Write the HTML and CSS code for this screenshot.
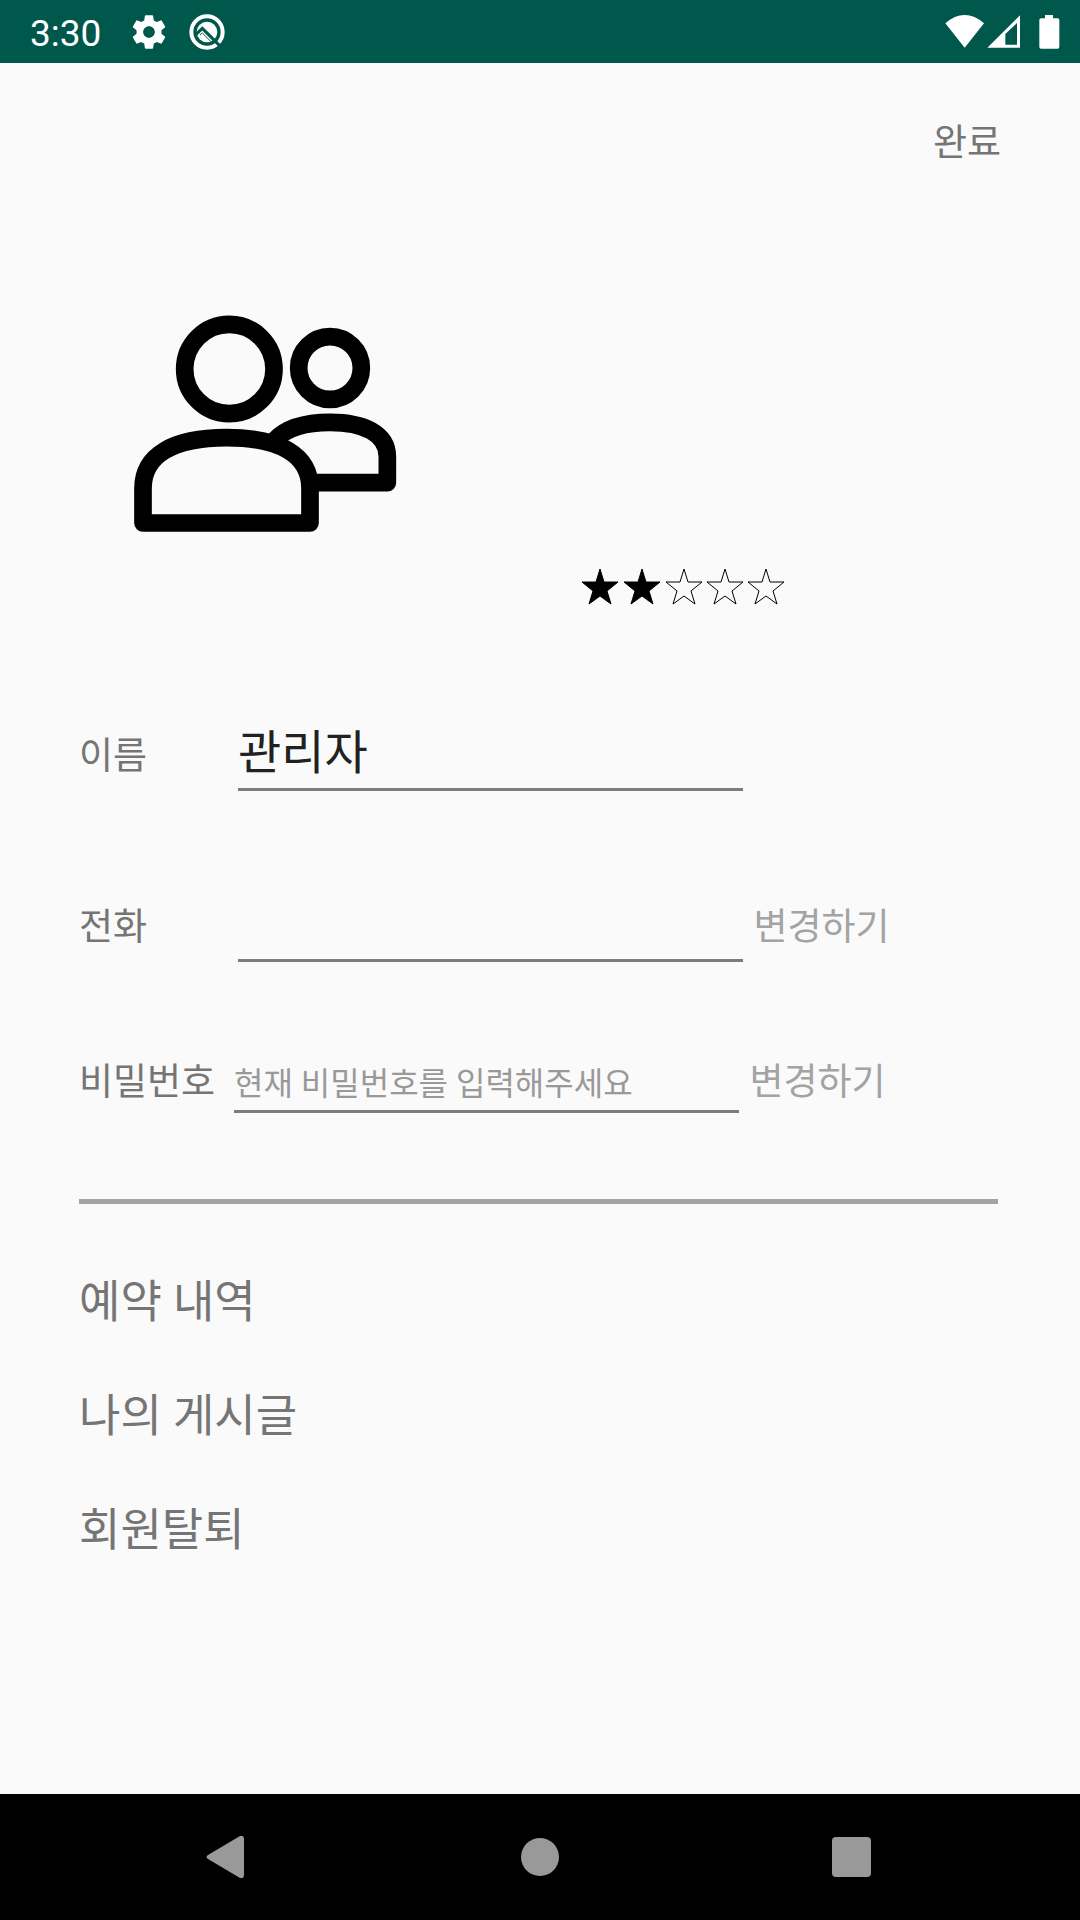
FILE: index.html
```html
<!DOCTYPE html>
<html lang="ko">
<head>
<meta charset="utf-8">
<meta name="viewport" content="width=device-width, initial-scale=1">
<title>내 정보</title>
<link rel="stylesheet" href="styles.css">
</head>
<body>
<div class="screen">
  <header class="status">
    <time class="clock">3:30</time>
    <svg class="status-icon" width="40" height="40" viewBox="0 0 24 24" aria-hidden="true"><path fill="#fff" d="M19.43 12.98c.04-.32.07-.64.07-.98s-.03-.66-.07-.98l2.11-1.65c.19-.15.24-.42.12-.64l-2-3.46c-.12-.22-.39-.3-.61-.22l-2.49 1c-.52-.4-1.08-.73-1.69-.98l-.38-2.65C14.46 2.18 14.25 2 14 2h-4c-.25 0-.46.18-.49.42l-.38 2.65c-.61.25-1.17.59-1.69.98l-2.49-1c-.23-.09-.49 0-.61.22l-2 3.46c-.13.22-.07.49.12.64l2.11 1.65c-.04.32-.07.65-.07.98s.03.66.07.98l-2.11 1.65c-.19.15-.24.42-.12.64l2 3.46c.12.22.39.3.61.22l2.49-1c.52.4 1.08.73 1.69.98l.38 2.65c.03.24.24.42.49.42h4c.25 0 .46-.18.49-.42l.38-2.65c.61-.25 1.17-.59 1.69-.98l2.49 1c.23.09.49 0 .61-.22l2-3.46c.12-.22.07-.49-.12-.64l-2.11-1.65zM12 15.5c-1.93 0-3.500-1.570-3.500-3.500s1.570-3.500 3.500-3.500 3.500 1.570 3.500 3.500-1.570 3.500-3.500 3.500z"/></svg>
    <svg class="status-icon status-icon-q" width="38" height="38" viewBox="0 0 114 114" fill="none" aria-hidden="true">
      <circle cx="57" cy="57" r="47" stroke="#fff" stroke-width="12"/>
      <circle cx="57" cy="57" r="31" fill="#fff"/>
      <path d="M24 64L43 46L98 101" stroke="#00574b" stroke-width="9"/>
      <path d="M36 66L43 60L72 89" stroke="#00574b" stroke-width="3"/>
    </svg>
    <svg class="signals" width="116" height="34" viewBox="0 0 348 102" aria-hidden="true">
      <path fill="#fff" d="M1 25Q29 0 59 0T117 25L59 98Z"/>
      <path fill="#fff" fill-rule="evenodd" d="M127 98L225 1V98ZM181 57V89H216V24Z"/>
      <path fill="#fff" d="M300 0h24v10h14q5 0 5 5v81q0 5-5 5h-50q-5 0-5-5v-81q0-5 5-5h12z"/>
    </svg>
  </header>

  <main class="profile">
    <div class="actions"><button type="button" class="text-button done">완료</button></div>

    <svg class="avatar" width="290" height="250" viewBox="0 0 870 750" fill="none" stroke="#000" stroke-width="53" stroke-linejoin="round" role="img" aria-label="프로필 사진">
      <circle cx="328" cy="207" r="134"/>
      <circle cx="630" cy="204" r="94"/>
      <path d="M69 669V565C69 465 160 413 320 413S570 465 570 565V669Z"/>
      <path d="M590 548H802V470C802 400 730 367 630 367C560 367 500 382 465 420"/>
    </svg>

    <svg class="rating" width="204" height="38" viewBox="0 0 204 38" role="img" aria-label="별점 5점 중 2점">
      <defs><path id="star" d="M18 0L22 13H36L25 22L29 35L18 27L7 35L11 22L0 13H14Z"/></defs>
      <g stroke="#000">
        <use href="#star" x="1" y="1"/>
        <use href="#star" x="43" y="1"/>
      </g>
      <g fill="none" stroke="#000">
        <use href="#star" x="85" y="1"/>
        <use href="#star" x="126" y="1"/>
        <use href="#star" x="167" y="1"/>
      </g>
    </svg>

    <form class="fields">
      <div class="field">
        <label class="label" for="name">이름</label>
        <input class="input" id="name" type="text" value="관리자">
      </div>
      <div class="field">
        <label class="label" for="phone">전화</label>
        <input class="input" id="phone" type="tel" placeholder=" ">
        <button type="button" class="text-button change">변경하기</button>
      </div>
      <div class="field field-compact">
        <label class="label" for="password">비밀번호</label>
        <input class="input" id="password" type="password" placeholder="현재 비밀번호를 입력해주세요">
        <button type="button" class="text-button change">변경하기</button>
      </div>
    </form>

    <hr class="divider">

    <nav class="menu">
      <a class="menu-link" href="#reservations">예약 내역</a>
      <a class="menu-link" href="#posts">나의 게시글</a>
      <a class="menu-link" href="#leave">회원탈퇴</a>
    </nav>
  </main>

  <footer class="navbar">
    <button type="button" class="nav-button" aria-label="뒤로"><svg width="42" height="42" viewBox="0 0 42 42"><path fill="#999" d="M2 19L34 0Q38-1 38 3V39Q38 43 34 42L2 23Q-1 21 2 19Z"/></svg></button>
    <button type="button" class="nav-button" aria-label="홈"><svg width="42" height="42" viewBox="0 0 42 42"><circle cx="21" cy="21" r="19" fill="#999"/></svg></button>
    <button type="button" class="nav-button" aria-label="최근 앱"><svg width="42" height="42" viewBox="0 0 42 42"><rect x="0" y="1" width="39" height="40" rx="4" fill="#999"/></svg></button>
  </footer>
</div>
</body>
</html>
```

FILE: styles.css
```css
* { box-sizing: border-box; }

body {
  margin: 0;
  background: #fafafa;
  color: #757575;
  font-family: Roboto, "Noto Sans CJK KR", sans-serif;
  font-size: 37px;
  line-height: 54px;
}

button, input { font: inherit; color: inherit; }

svg { display: block; flex: none; }

.screen {
  display: flex;
  flex-direction: column;
  min-height: 100vh;
}

.status {
  display: flex;
  align-items: center;
  height: 63px;
  padding: 0 19px 0 30px;
  background: #00574b;
  color: #fff;
}

.clock { line-height: 63px; padding-top: 3px; }

.status-icon { margin-left: 28px; }

.status-icon-q { margin-left: 19px; }

.signals { margin-left: auto; }

.profile {
  flex: 1;
  display: flex;
  flex-direction: column;
  padding: 54px 82px 48px 79px;
}

.actions {
  display: flex;
  justify-content: flex-end;
}

.text-button {
  padding: 0;
  border: 0;
  background: none;
  color: #a3a3a3;
  cursor: pointer;
}

.done { margin-right: -3px; color: #757575; }

.avatar { margin: 129px 0 0 41px; }

.rating { margin: 18px 0 0 502px; }

.fields {
  display: flex;
  flex-direction: column;
  margin-top: 105px;
}

.field {
  display: flex;
  align-items: baseline;
  height: 80px;
  margin-bottom: 91px;
}

.label { width: 159px; }

.input {
  width: 55%;
  height: 80px;
  padding: 0 0 3px;
  border: 0;
  border-bottom: 3px solid #7c7c7c;
  border-radius: 0;
  background: none;
  color: #212121;
  font-family: "Noto Sans CJK KR", sans-serif;
  font-size: 47px;
  outline: 0;
}

.input::placeholder { color: #999; opacity: 1; }

.change { margin-left: 10px; }

.field-compact { height: 71px; margin: -11px 0 0; }

.field-compact .label { width: 155px; }

.field-compact .input {
  height: 71px;
  padding: 15px 0 0;
  font-family: Roboto, "Noto Sans CJK KR", sans-serif;
  font-size: 32px;
}

.divider {
  width: 100%;
  height: 5px;
  margin: 86px 0 0;
  border: 0;
  background: #a3a3a3;
}

.menu {
  display: flex;
  flex-direction: column;
  align-items: flex-start;
  gap: 50px;
  margin-top: 67px;
}

.menu-link {
  color: inherit;
  font-size: 45px;
  line-height: 64px;
  text-decoration: none;
}

.navbar {
  display: flex;
  align-items: center;
  justify-content: space-between;
  height: 126px;
  padding: 0 192px;
  background: #000;
}

.nav-button {
  padding: 0 14px;
  border: 0;
  background: none;
}
```
